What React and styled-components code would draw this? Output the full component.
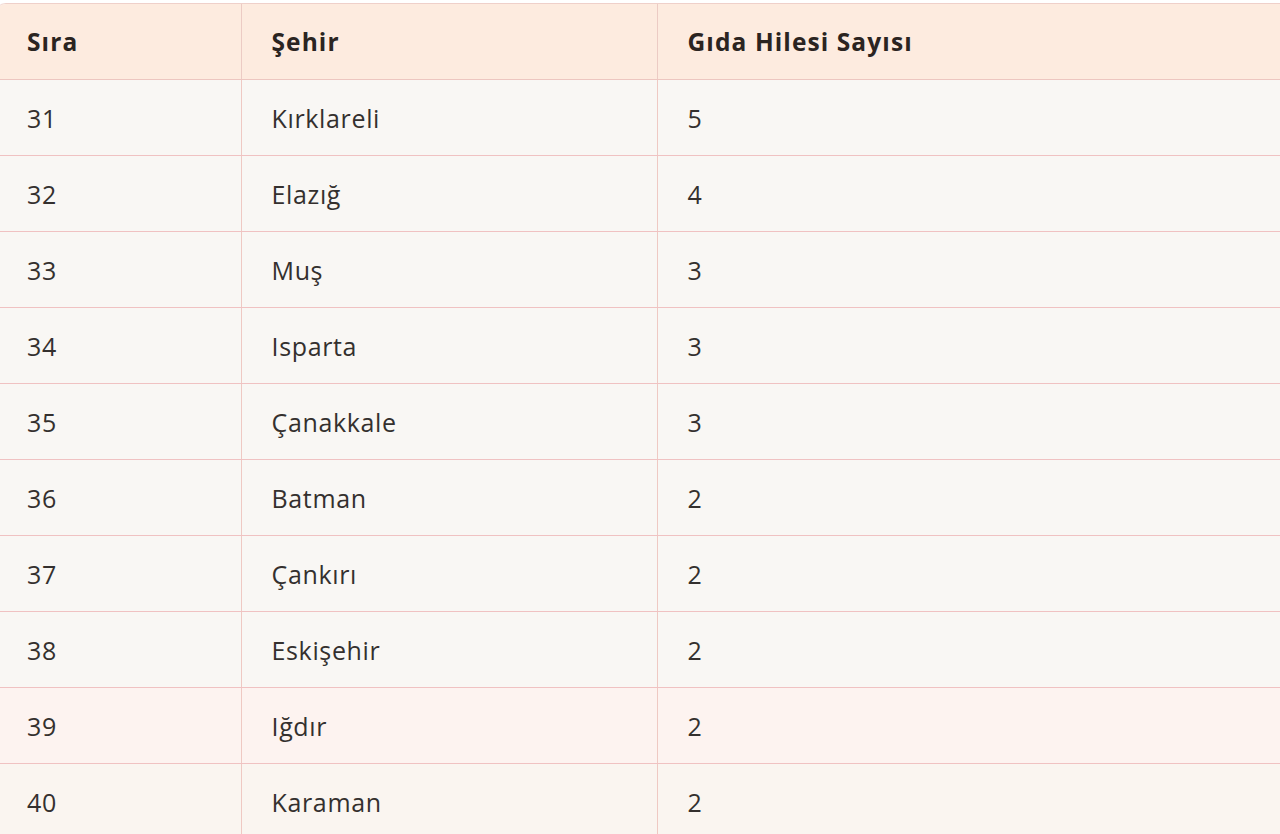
import React from "react";
import styled, { createGlobalStyle } from "styled-components";

const GlobalStyle = createGlobalStyle`
  html, body {
    margin: 0;
    padding: 0;
    background: #ffffff;
    overflow: hidden;
  }
`;

const rows = [
  { rank: 31, city: "Kırklareli", count: 5 },
  { rank: 32, city: "Elazığ", count: 4 },
  { rank: 33, city: "Muş", count: 3 },
  { rank: 34, city: "Isparta", count: 3 },
  { rank: 35, city: "Çanakkale", count: 3 },
  { rank: 36, city: "Batman", count: 2 },
  { rank: 37, city: "Çankırı", count: 2 },
  { rank: 38, city: "Eskişehir", count: 2 },
  { rank: 39, city: "Iğdır", count: 2, tint: "#fdf3f0" },
  { rank: 40, city: "Karaman", count: 2, tint: "#faf5f0" },
];

export default function App() {
  return (
    <>
      <GlobalStyle />
      <Page>
        <Wrapper>
          <Table>
            <colgroup>
              <col style={{ width: 246 }} />
              <col style={{ width: 416 }} />
              <col />
            </colgroup>
            <thead>
              <tr>
                <HeadCell>Sıra</HeadCell>
                <HeadCell>Şehir</HeadCell>
                <HeadCell>Gıda Hilesi Sayısı</HeadCell>
              </tr>
            </thead>
            <tbody>
              {rows.map((row) => (
                <Row key={row.rank} $tint={row.tint}>
                  <Cell>{row.rank}</Cell>
                  <Cell>{row.city}</Cell>
                  <Cell>{row.count}</Cell>
                </Row>
              ))}
            </tbody>
          </Table>
        </Wrapper>
      </Page>
    </>
  );
}

const Page = styled.div`
  width: 1280px;
  height: 834px;
  overflow: hidden;
  padding-top: 3px;
  box-sizing: border-box;
`;

const Wrapper = styled.div`
  margin-left: -6px;
  width: 1300px;
  border: 1px solid #efd0ca;
  border-radius: 12px 12px 0 0;
  overflow: hidden;
`;

const Table = styled.table`
  width: 100%;
  border-collapse: collapse;
  table-layout: fixed;
  font-family: "Open Sans", "Noto Sans", sans-serif;
  color: #2f2a28;
`;

const HeadCell = styled.th`
  height: 75px;
  padding: 0 30px;
  text-align: left;
  font-size: 24.5px;
  font-weight: 700;
  letter-spacing: 1.1px;
  color: #2b2421;
  background: #fdebdf;
  border-bottom: 1px solid #edc6c0;
  border-left: 1px solid #eccbc4;
  &:first-child {
    border-left: none;
    padding-left: 32px;
  }
`;

const Row = styled.tr`
  background: ${(p) => p.$tint || "#f9f7f4"};
`;

const Cell = styled.td`
  height: 75px;
  padding: 0 30px;
  font-size: 25px;
  font-weight: 400;
  letter-spacing: 0.65px;
  color: #34302e;
  border-left: 1px solid #efc9c3;
  border-bottom: 1px solid #f0c2c2;
  &:first-child {
    border-left: none;
    padding-left: 32px;
  }
`;
